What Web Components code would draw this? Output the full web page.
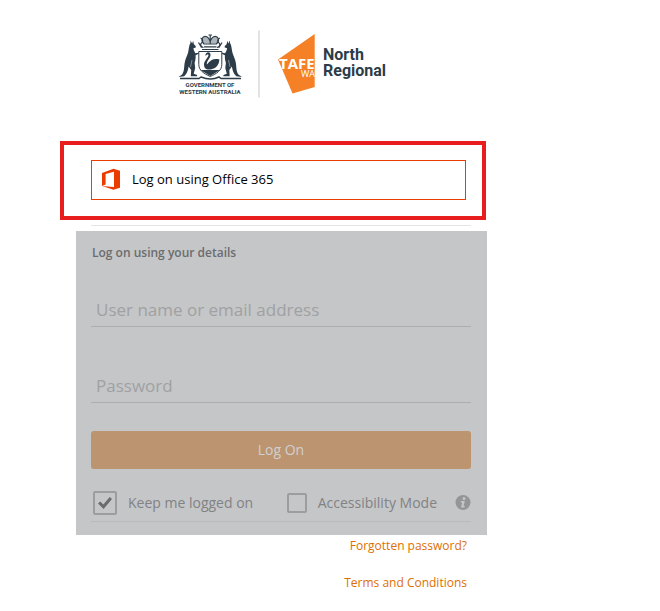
<!DOCTYPE html>
<html lang="en">
<head>
<meta charset="utf-8">
<meta name="viewport" content="width=device-width, initial-scale=1">
<title>Log On - North Regional TAFE</title>
<style>
  body { margin: 0; background: #fff; font-family: 'Open Sans', 'Noto Sans', sans-serif; }
</style>
</head>
<body>
<login-page>
  <brand-header slot="brand"></brand-header>
  <office-button slot="sso">Log on using Office 365</office-button>
  <login-form heading="Log on using your details"></login-form>
  <footer-links slot="links"></footer-links>
</login-page>

<script>
(function () {
  function define(name, html) {
    customElements.define(name, class extends HTMLElement {
      connectedCallback() {
        if (this.shadowRoot) return;
        var root = this.attachShadow({ mode: 'open' });
        root.innerHTML = html;
        if (this.init) this.init(root);
      }
      init(root) {
        var self = this;
        root.querySelectorAll('[data-attr]').forEach(function (el) {
          el.textContent = self.getAttribute(el.dataset.attr) || '';
        });
      }
    });
  }

  // Page column: logo, SSO callout, form, links
  define('login-page',
    '<style>' +
    ':host{display:block;}' +
    'main{max-width:427px;margin-left:60px;padding-top:28px;}' +
    '.callout{margin-right:1px;padding:15px 16px 16px 27px;border:4px solid #e71d1e;}' +
    'hr{margin:5px 16px 5px 31px;border:0;border-top:1px solid #e4e4e4;}' +
    '.form{margin-left:16px;}' +
    '</style>' +
    '<main>' +
    '<slot name="brand"></slot>' +
    '<div class="callout"><slot name="sso"></slot></div>' +
    '<hr>' +
    '<div class="form"><slot></slot></div>' +
    '<slot name="links"></slot>' +
    '</main>');

  define('brand-header',
    '<style>' +
    ':host{display:block;padding:0 0 41px 116px;}' +
    'svg{display:block;width:214px;height:72px;}' +
    '</style>' +
    '<svg viewBox="176 28 214 72" role="img" aria-label="Government of Western Australia, TAFE WA North Regional">' +
    // kangaroo supporter, used on both sides
    '<defs><g id="roo" fill="#2c3c48">' +
    '<path d="M190.500 40.500l1.700 3 .9-2.800.9 3.800c1.500.8 2.200 2 1.700 3l-2.300.8c.3 2 1.200 3.400 1.900 5l3.200-.6.2 1-3.100 1.500c.2 3-.2 5.200-1 7.600l.6 5.100-1.500 5.800 3.400 1.200v1.300h-6.300l.4-6.200-2.600-3.500c-.5 3.600-1.700 7.500-4.400 9.800l-5.700.8 3.600-2.500c2.400-3.400 1.800-7.600 2.600-11.800.5-4 2.500-6.600 3.400-10.300.8-3.500.9-7.500 2.400-9.500z"/>' +
    '<path d="M192 60l-1.500 7" stroke="#9aa3a9" stroke-width=".8"/></g></defs>' +
    '<use href="#roo"/><use href="#roo" transform="translate(420.500 0) scale(-1 1)"/>' +
    // crown and mantling
    '<path d="M204 43.500c-3-4-1-7.500 2-7 2 .3 3.200 1.500 4.200 3.500 1-2 2.200-3.200 4.200-3.500 3-.5 5 3 2 7z" fill="#aeb6bb"/>' +
    '<g fill="none" stroke="#2c3c48" stroke-width="1.200">' +
    '<path d="M204 44c-4-4-1.500-8 2-7.500 2.500.5 3.500 3 4.200 5 .7-2 1.700-4.500 4.200-5 3.500-.5 6 3.500 2 7.500zM210.200 34.500v9M208.500 35h3.500M204 46.800h12.500"/>' +
    '<path d="M200.500 38c3 1 2.500 4 1 5s-1 4 2 4.500M220 38c-3 1-2.500 4-1 5s1 4-2 4.500M198.500 42.500l3 5M222 42.500l-3 5M202 49.500h16.500"/></g>' +
    // shield and swan
    '<path d="M198.800 51.500h23v13c0 6-5 9-11.500 12-6.500-3-11.500-6-11.500-12z" fill="#fff" stroke="#2c3c48" stroke-width="1"/>' +
    '<path d="M205.500 56c-.5-4 4.500-5 5-1.500.5 3.500-4.500 6.500-3.500 10 3-4.500 7-6.500 12.500-5-.8 2 0 3.500-1.800 5.500-1.500 3-5.500 4.500-8.700 4.500-3.500 0-5-2-5-5 0-4 4.500-7 4.500-9.500-.8-1-2-.3-3 1z" fill="#2c3c48"/>' +
    '<path d="M200.500 70h19.500l-9.700 6z" fill="#2c3c48"/>' +
    '<path d="M180 78.500h19l2-1.500c6 2.500 13 2.500 18 0l2 1.500h20" fill="none" stroke="#2c3c48" stroke-width="1.500"/>' +
    '<g fill="#2c3c48" font-family="Roboto,Arial,sans-serif" font-weight="700" font-size="6" text-anchor="middle">' +
    '<text x="210" y="87">GOVERNMENT OF</text><text x="210" y="94">WESTERN AUSTRALIA</text></g>' +
    '<path d="M259 30.500v67" stroke="#d9dadb" stroke-width="1.500"/>' +
    '<path d="M314.700 34L278 59.500l14.500 34 22.200-6.500z" fill="#f58025"/>' +
    '<g fill="#fff"><text x="279" y="69" font-family="Open Sans,sans-serif" font-weight="700" font-size="15">TAFE</text>' +
    '<text x="301" y="77" font-family="Open Sans,sans-serif" font-size="9">WA</text></g>' +
    '<g fill="#2c3c48" font-family="Roboto,sans-serif" font-weight="700" font-size="16">' +
    '<text x="323" y="60">North</text><text x="323" y="76">Regional</text></g>' +
    '</svg>');

  define('office-button',
    '<style>' +
    ':host{display:block;}' +
    'button{display:flex;align-items:center;gap:11px;box-sizing:border-box;width:100%;height:40px;padding:0 9px 2px;' +
    'border:1px solid #eb3c00;background:#fff;color:#000;font:13px/18px "Open Sans",sans-serif;text-align:left;cursor:pointer;}' +
    'svg{width:20px;height:22px;}' +
    '</style>' +
    '<button type="button">' +
    '<svg viewBox="0 0 20 22" aria-hidden="true"><path fill="#eb3c00" d="M1 18V5L12.500.7 19 2.700v17L12.500 21.700 1 18l12 1V3.800L4.600 6v10.400z"/></svg>' +
    '<span><slot></slot></span></button>');

  define('text-field',
    '<style>' +
    ':host{display:block;}' +
    'input{display:block;box-sizing:border-box;width:100%;height:34px;padding:0 5px;border:0;' +
    'border-bottom:1px solid #acadaf;border-radius:0;background:transparent;color:#6a6b6d;font:17px/24px "Open Sans",sans-serif;}' +
    'input::placeholder{color:#a0a1a3;opacity:1;}' +
    '</style><input>');
  customElements.get('text-field').prototype.init = function (root) {
    var input = root.querySelector('input');
    input.type = this.getAttribute('type') || 'text';
    input.placeholder = this.getAttribute('label');
    input.setAttribute('aria-label', this.getAttribute('label'));
  };

  define('check-option',
    '<style>' +
    ':host{display:block;}' +
    'label{display:flex;align-items:center;gap:11px;color:#818284;font-size:14px;line-height:20px;white-space:nowrap;}' +
    'input{appearance:none;display:grid;place-items:center;box-sizing:border-box;width:20px;height:20px;margin:2px 0;' +
    'border:2px solid #9c9d9f;border-radius:2px;}' +
    'input:checked{width:24px;height:24px;margin:0;}' +
    'input:checked::before{content:"";width:14px;height:12px;background:#6b6c6e;' +
    'clip-path:polygon(0 55%,16% 38%,38% 62%,84% 0,100% 16%,40% 100%);}' +
    '</style><label><input type="checkbox"><span><slot></slot></span></label>');
  customElements.get('check-option').prototype.init = function (root) {
    root.querySelector('input').checked = this.hasAttribute('checked');
  };

  define('login-form',
    '<style>' +
    ':host{display:block;background:#c5c6c8;}' +
    'form{padding:12px 16px 13px 15px;}' +
    'h2{margin:0 0 30px 1px;color:#6b6c6e;font-size:12px;font-weight:600;line-height:20px;}' +
    'text-field{margin-bottom:42px;}' +
    'text-field + text-field{margin-bottom:28px;}' +
    '.submit{display:block;width:100%;height:38px;padding:0;border:0;border-radius:3px;background:#bc9470;color:#cfd0d2;' +
    'font:14px/20px "Open Sans",sans-serif;cursor:pointer;}' +
    '.options{display:flex;align-items:center;gap:18px;padding:22px 0 6px 2px;border-bottom:1px solid #b9babc;}' +
    '.options check-option + check-option{margin-left:auto;}' +
    '.info{display:block;width:16px;height:16px;}' +
    '</style>' +
    '<form>' +
    '<h2 data-attr="heading"></h2>' +
    '<text-field label="User name or email address"></text-field>' +
    '<text-field label="Password" type="password"></text-field>' +
    '<button class="submit" type="button">Log On</button>' +
    '<div class="options">' +
    '<check-option checked>Keep me logged on</check-option>' +
    '<check-option>Accessibility Mode</check-option>' +
    '<svg class="info" viewBox="0 0 16 16" aria-hidden="true"><circle cx="8" cy="7.500" r="7.500" fill="#949597"/>' +
    '<circle cx="9" cy="3.500" r="1.500" fill="#c5c6c8"/><path d="M6 6h3.800L8.600 11h1.200L9.300 12.500H6l1.200-5H5.600z" fill="#c5c6c8"/></svg>' +
    '</div></form>');

  define('footer-links',
    '<style>' +
    ':host{display:block;}' +
    'nav{display:flex;flex-direction:column;align-items:flex-end;gap:17px;padding:1px 20px 0 0;}' +
    'a{color:#dd6f00;font-size:12px;line-height:20px;text-decoration:none;}' +
    '</style>' +
    '<nav><a href="#forgotten">Forgotten password?</a><a href="#terms">Terms and Conditions</a></nav>');
})();
</script>
</body>
</html>
